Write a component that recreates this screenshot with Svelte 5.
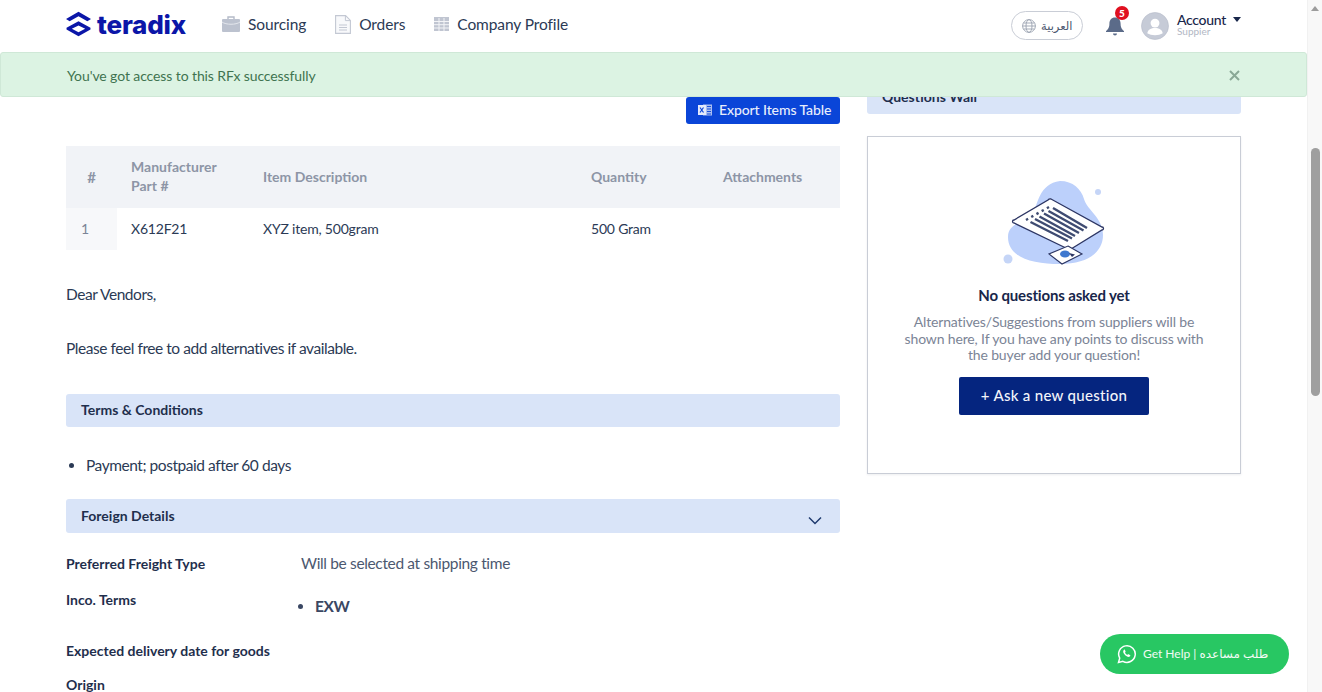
<script>
  const navItems = [
    { label: 'Sourcing', icon: 'case' },
    { label: 'Orders', icon: 'doc' },
    { label: 'Company Profile', icon: 'building' }
  ];

  const items = [
    { no: 1, part: 'X612F21', description: 'XYZ item, 500gram', quantity: '500 Gram' }
  ];

  let showAlert = true;
</script>

<div class="page">
  <div class="viewport">
    <header class="topbar">
      <a class="logo" href="#top">
        <svg width="25" height="26" viewBox="1 1 24 24.5">
          <path d="M13 1.5 25 8.5 21.5 10.6 13 5.7 4.5 10.6 1 8.5Z" fill="#0b16a8"/>
          <path d="M13 10.5 24.5 16.8V18.6L13 25 1.5 18.6V16.8ZM13 14.6 6.6 17.8 13 21.2 19.4 17.8Z" fill="#0b16a8"/>
        </svg>
        <span>teradix</span>
      </a>
      <nav>
        {#each navItems as item}
          <a class="nav-item" href="#top">
            {#if item.icon === 'case'}
              <svg width="18" height="16" viewBox="0 0 18 16">
                <path d="M6 3V1h6v2" fill="none" stroke="#b4bac8" stroke-width="1.4"/>
                <rect x="0" y="3" width="18" height="13" rx="1" fill="#bcc2cf"/>
                <path d="M0 6c4 3 14 3 18 0" fill="none" stroke="#e4e7ed" stroke-width="1"/>
              </svg>
            {:else if item.icon === 'doc'}
              <svg width="16" height="19" viewBox="0 0 16 19">
                <path d="M.6.6h10l4.8 4.8v13H.6Z" fill="#f8f9fb" stroke="#c3c8d3" stroke-width="1.1"/>
                <path d="M10.4.8v4.8h4.8" fill="none" stroke="#c3c8d3"/>
                <path d="M4 10h8M4 12.5h8M4 15h8" stroke="#c3c8d3"/>
              </svg>
            {:else}
              <svg width="15" height="14" viewBox="0 0 15 14">
                <rect width="15" height="14" fill="#c0c5d1"/>
                <path d="M0 4.500h15M0 7.700h15M0 11h15M5 1v13M10 1v13" stroke="#f3f4f7" stroke-width="1"/>
              </svg>
            {/if}
            <span>{item.label}</span>
          </a>
        {/each}
      </nav>
      <div class="top-right">
        <button class="lang">
          <svg width="14" height="14" viewBox="0 0 14 14" fill="none" stroke="#9aa1b0" stroke-width="0.9">
            <circle cx="7" cy="7" r="6.4"/>
            <ellipse cx="7" cy="7" rx="3" ry="6.4"/>
            <path d="M.6 7h12.800M1.500 4h11M1.500 10h11"/>
          </svg>
          <span>العربية</span>
        </button>
        <div class="bell">
          <svg width="20" height="20" viewBox="0 0 19 20">
            <path d="M9.500 1.500c3.600 0 5.600 2.700 5.600 6.200 0 4 1.400 5.500 3.400 7.300v.9H.5V15c2-1.800 3.400-3.300 3.400-7.300 0-3.500 2-6.200 5.600-6.200Z" fill="#5b6b89"/>
            <path d="M7.500 17.500h4c0 1.200-.9 2-2 2s-2-.8-2-2Z" fill="#5b6b89"/>
          </svg>
          <span class="badge">5</span>
        </div>
        <div class="account">
          <svg class="avatar" width="28" height="28" viewBox="0 0 29 29">
            <circle cx="14.500" cy="14.500" r="14" fill="#c6cbd7" stroke="#b4bac8" stroke-width="0.6"/>
            <circle cx="14.500" cy="11.500" r="4.600" fill="#fff"/>
            <path d="M6.500 22c.6-4 4-5.500 8-5.500s7.400 1.500 8 5.500c-2 1.300-5 2-8 2s-6-.7-8-2Z" fill="#fff"/>
          </svg>
          <div class="who">
            <div class="name">Account <i class="caret"></i></div>
            <div class="role">Suppier</div>
          </div>
        </div>
      </div>
    </header>

    {#if showAlert}
      <div class="alert">
        <span>You've got access to this RFx successfully</span>
        <button class="close" aria-label="Close" on:click={() => (showAlert = false)}>
          <svg width="11" height="11" viewBox="0 0 11 11" stroke="#8aa896" stroke-width="2">
            <path d="M1 1l9 9M10 1l-9 9"/>
          </svg>
        </button>
      </div>
    {/if}

    <main class="content">
      <section class="left">
        <div class="export-row">
          <button class="export">
            <svg width="14" height="14" viewBox="0 0 14 14">
              <rect x="5" y="1.500" width="9" height="11" fill="#a9bdf0"/>
              <path d="M9 3.500h4M9 6h4M9 8.500h4M9 11h4" stroke="#0a45d8" stroke-width="0.9"/>
              <rect x="0" y="2" width="8" height="10" fill="#e4eafb"/>
              <path d="M2 4.500l3.500 5M5.500 4.500l-3.500 5" stroke="#0a45d8" stroke-width="1.200"/>
            </svg>
            <span>Export Items Table</span>
          </button>
        </div>

        <table>
          <thead>
            <tr>
              <th class="c-no">#</th>
              <th class="c-part">Manufacturer<br />Part #</th>
              <th class="c-desc">Item Description</th>
              <th class="c-qty">Quantity</th>
              <th class="c-att">Attachments</th>
            </tr>
          </thead>
          <tbody>
            {#each items as row}
              <tr>
                <td class="no">{row.no}</td>
                <td>{row.part}</td>
                <td>{row.description}</td>
                <td>{row.quantity}</td>
                <td></td>
              </tr>
            {/each}
          </tbody>
        </table>

        <p class="note first">Dear Vendors,</p>
        <p class="note second">Please feel free to add alternatives if available.</p>

        <div class="bar terms">Terms &amp; Conditions</div>
        <ul class="terms-list">
          <li>Payment; postpaid after 60 days</li>
        </ul>

        <div class="bar foreign">
          <span>Foreign Details</span>
          <svg class="chev" width="14" height="9" viewBox="0 0 14 9" fill="none" stroke="#1f3a6e" stroke-width="1.500">
            <path d="M1 1.500l6 6 6-6"/>
          </svg>
        </div>

        <dl class="details">
          <div class="freight">
            <dt>Preferred Freight Type</dt>
            <dd class="plain">Will be selected at shipping time</dd>
          </div>
          <div class="inco">
            <dt>Inco. Terms</dt>
            <dd><ul><li>EXW</li></ul></dd>
          </div>
          <div class="delivery">
            <dt>Expected delivery date for goods</dt>
            <dd></dd>
          </div>
          <div class="origin">
            <dt>Origin</dt>
            <dd></dd>
          </div>
        </dl>
      </section>

      <aside class="right">
        <div class="bar wall">Questions Wall</div>
        <div class="wall-card">
          <svg class="art" width="104" height="88" viewBox="0 0 104 88">
            <path d="M57 1C70 1 78 9 81 19C84 30 100 38 100 55C100 72 85 84 57 84C30 84 5 78 5 57C5 43 22 42 30 33C35 24 36 4 57 1Z" fill="#bcd0fb"/>
            <circle cx="95" cy="12" r="3" fill="#c5d5f7"/>
            <circle cx="5" cy="79" r="4.500" fill="#c5d5f7"/>
            <path d="M45 20a3 3 0 0 1 3-1L99 47a1.500 1.500 0 0 1 0 3L68 69a3 3 0 0 1-3 0L11 43a1.500 1.500 0 0 1 0-3Z" fill="#fff" stroke="#2c3563" stroke-width="1.300"/>
            <g stroke="#3f4c72" stroke-width="2.400">
              <path d="M50 28 84 48M45.500 31 80.500 50.500M41 33.500 76 53M36.500 36.500 72 56M32 39 69 58.500M27.500 42 65 61"/>
            </g>
            <path d="M23 40 46 27" stroke="#3f4c72" stroke-width="2.400" stroke-dasharray="2.400 3.600"/>
            <path d="M65 66 79 74 59 84 46 74Z" fill="#fff" stroke="#2c3563" stroke-width="1.100"/>
            <ellipse cx="62" cy="74" rx="5" ry="3.500" fill="#3e78cf"/>
            <path d="M66 73l6 1.500-3 2.500Z" fill="#2c3563"/>
          </svg>
          <h3>No questions asked yet</h3>
          <p>Alternatives/Suggestions from suppliers will be shown here, If you have any points to discuss with the buyer add your question!</p>
          <button class="ask">+ Ask a new question</button>
        </div>
      </aside>
    </main>

    <button class="help">
      <svg width="20" height="20" viewBox="0 0 20 20" fill="none">
        <path d="M1.500 18.500l1.200-4.400a8.300 8.300 0 1 1 3.200 3.200Z" stroke="#fff" stroke-width="1.500"/>
        <path d="M7 5.800c-1.300 1-1.100 3 .8 5 2 2.100 4 2.700 5.200 1.500.5-.5.400-1-.1-1.300l-1.300-.7c-.4-.2-.7 0-1 .3l-.3.3c-.9-.3-1.900-1.300-2.300-2.300l.3-.3c.3-.3.400-.6.200-1l-.6-1.300c-.2-.5-.6-.6-.9-.2Z" fill="#fff"/>
      </svg>
      <span>Get Help | طلب مساعده</span>
    </button>
  </div>

  <div class="scrollbar">
    <i class="arrow"></i>
    <div class="thumb"></div>
  </div>
</div>

<style>
  :global(body) {
    margin: 0;
    overflow: hidden;
    background: #fff;
  }

  .page {
    display: flex;
    height: 692px;
    font-family: "Lato", "DejaVu Sans", sans-serif;
    color: #2b3a55;
    overflow: hidden;
  }

  .viewport {
    position: relative;
    flex: 1;
    min-width: 0;
    overflow: hidden;
  }

  .scrollbar {
    width: 15px;
    background: #f8f8f8;
    display: flex;
    flex-direction: column;
    align-items: center;
    border-left: 1px solid #f1f1f1;
    box-sizing: border-box;
  }

  .arrow {
    margin-top: 6px;
    border-left: 4.500px solid transparent;
    border-right: 4.500px solid transparent;
    border-bottom: 5px solid #9c9c9c;
  }

  .thumb {
    width: 9px;
    height: 248px;
    margin-top: 137px;
    background: #9f9f9f;
    border-radius: 5px;
  }

  .topbar {
    position: absolute;
    top: 0;
    left: 0;
    right: 0;
    height: 51px;
    z-index: 3;
    display: flex;
    align-items: center;
    padding: 0 66px;
    background: #fff;
    box-sizing: border-box;
  }

  .logo {
    display: flex;
    align-items: center;
    gap: 6px;
    margin-bottom: 3px;
    color: #0b16a8;
    font-family: "Inter", sans-serif;
    font-size: 26px;
    font-weight: 800;
    text-decoration: none;
    letter-spacing: -0.2px;
  }

  nav {
    display: flex;
    align-items: center;
    margin-left: 36px;
    margin-bottom: 3px;
    gap: 29px;
  }

  .nav-item {
    display: flex;
    align-items: center;
    gap: 8px;
    color: #2b3a55;
    font-size: 15.5px;
    letter-spacing: -0.1px;
    text-decoration: none;
  }

  .top-right {
    margin-left: auto;
    display: flex;
    align-items: center;
  }

  .lang {
    display: flex;
    align-items: center;
    gap: 5px;
    width: 72px;
    height: 29px;
    padding: 0 10px;
    border: 1px solid #c9cdd6;
    border-radius: 15px;
    background: #fff;
    color: #4c5870;
    font-family: "DejaVu Sans", sans-serif;
    font-size: 11.5px;
    box-sizing: border-box;
  }

  .lang svg {
    flex: none;
  }

  .bell {
    position: relative;
    display: flex;
    margin-left: 22px;
  }

  .badge {
    position: absolute;
    top: -10px;
    right: -4px;
    width: 14px;
    height: 14px;
    border-radius: 50%;
    background: #e01020;
    color: #fff;
    font-size: 10px;
    font-weight: 900;
    line-height: 14px;
    text-align: center;
  }

  .account {
    display: flex;
    align-items: center;
    gap: 8px;
    margin-left: 16px;
  }

  .avatar {
    display: block;
  }

  .who {
    padding-bottom: 2px;
  }

  .name {
    display: flex;
    align-items: center;
    gap: 7px;
    color: #18264a;
    font-size: 14px;
    font-weight: 500;
    letter-spacing: -0.3px;
    line-height: 13px;
  }

  .caret {
    border-left: 4px solid transparent;
    border-right: 4px solid transparent;
    border-top: 5px solid #18264a;
  }

  .role {
    color: #b2b7c4;
    font-size: 10px;
    line-height: 10px;
  }

  .alert {
    position: absolute;
    top: 52px;
    left: 0;
    right: 0;
    height: 45px;
    z-index: 2;
    display: flex;
    align-items: center;
    justify-content: space-between;
    padding: 2px 66px 0;
    background: #dcf3e3;
    border: 1px solid #cfe8d7;
    border-radius: 3px;
    box-sizing: border-box;
    color: #3f7350;
    font-size: 14px;
    letter-spacing: -0.1px;
  }

  .close {
    display: flex;
    padding: 0;
    border: 0;
    background: none;
  }

  .content {
    display: flex;
    gap: 27px;
    padding: 97px 66px 0;
  }

  .left {
    width: 774px;
    flex: none;
  }

  .right {
    width: 374px;
    flex: none;
    margin-top: -17px;
  }

  .export-row {
    display: flex;
    justify-content: flex-end;
  }

  .export {
    display: flex;
    align-items: center;
    gap: 7px;
    width: 154px;
    height: 27px;
    padding: 0 0 2px 12px;
    border: 0;
    border-radius: 3px;
    background: #0a45d8;
    color: #e8eefc;
    font-family: inherit;
    font-size: 14px;
    font-weight: 500;
    letter-spacing: -0.1px;
    white-space: nowrap;
  }

  table {
    width: 774px;
    margin-top: 22px;
    border-collapse: collapse;
    table-layout: fixed;
    font-size: 14px;
  }

  th {
    height: 62px;
    padding: 0 0 2px 14px;
    background: #f1f3f7;
    color: #8d95a6;
    font-weight: 700;
    line-height: 19px;
    text-align: left;
    box-sizing: border-box;
  }

  th.c-no {
    width: 51px;
    padding: 0;
    text-align: center;
    font-size: 15px;
  }

  .c-part { width: 132px; }
  .c-desc { width: 328px; }
  .c-qty { width: 132px; }

  td {
    height: 42px;
    padding: 0 0 2px 14px;
    color: #2b3a55;
    letter-spacing: -0.2px;
    box-sizing: border-box;
  }

  td.no {
    background: #f7f8fa;
    color: #7b8496;
    padding-left: 15px;
  }

  .note {
    margin: 0;
    font-size: 15.5px;
    letter-spacing: -0.45px;
    line-height: 20px;
  }

  .first { margin-top: 34px; }
  .second { margin-top: 34px; }

  .bar {
    display: flex;
    align-items: center;
    justify-content: space-between;
    padding: 0 15px 2px;
    background: #d9e4f8;
    border-radius: 3px;
    color: #1f2f4d;
    font-size: 14px;
    font-weight: 700;
    box-sizing: border-box;
  }

  .terms {
    height: 33px;
    margin-top: 36px;
  }

  .terms-list {
    margin: 28px 0 0;
    padding-left: 20px;
    font-size: 15.5px;
    letter-spacing: -0.45px;
    line-height: 20px;
  }

  .foreign {
    height: 34px;
    margin-top: 24px;
    padding-right: 18px;
  }

  .chev {
    margin-top: 11px;
  }

  .details {
    margin: 0;
    font-size: 14px;
  }

  .details > div {
    display: flex;
    margin: 0;
  }

  dt {
    width: 235px;
    flex: none;
    color: #1f2f4d;
    font-weight: 700;
    line-height: 18px;
  }

  dd {
    margin: 0;
    color: #4c5870;
    font-size: 15.5px;
    letter-spacing: -0.35px;
    line-height: 20px;
  }

  dd.plain {
    margin-top: -2px;
  }

  dd ul {
    margin: 5px 0 0;
    padding-left: 14px;
    color: #3a4763;
    font-weight: 700;
  }

  .freight { padding-top: 22px; }
  .inco { padding-top: 18px; }
  .delivery { padding-top: 26px; }
  .origin { padding-top: 16px; }

  .wall {
    height: 34px;
  }

  .wall-card {
    display: flex;
    flex-direction: column;
    align-items: center;
    height: 338px;
    margin-top: 22px;
    padding-top: 43px;
    border: 1px solid #c9cdd6;
    box-shadow: 0 1px 2px rgba(30, 40, 70, 0.08);
    box-sizing: border-box;
  }

  .art {
    display: block;
    margin-left: 2px;
  }

  h3 {
    margin: 17px 0 0;
    color: #18264a;
    font-size: 15px;
    font-weight: 700;
    letter-spacing: -0.15px;
    line-height: 20px;
  }

  .wall-card p {
    width: 310px;
    margin: 9px 0 0;
    color: #7b8496;
    font-size: 14px;
    letter-spacing: -0.15px;
    line-height: 16.500px;
    text-align: center;
  }

  .ask {
    width: 190px;
    height: 38px;
    margin-top: 13px;
    padding: 0 0 2px;
    border: 0;
    border-radius: 2px;
    background: #05257f;
    color: #f2f4fa;
    font-family: inherit;
    font-size: 15px;
    font-weight: 500;
    letter-spacing: 0.3px;
  }

  .help {
    position: absolute;
    right: 18px;
    bottom: 18px;
    z-index: 4;
    display: flex;
    align-items: center;
    gap: 6px;
    width: 189px;
    height: 40px;
    padding: 0 0 0 17px;
    border: 0;
    border-radius: 20px;
    background: #28c763;
    color: #f2fbf5;
    font-family: "Lato", "DejaVu Sans", sans-serif;
    font-size: 12px;
    white-space: nowrap;
    box-sizing: border-box;
  }

  .help span {
    margin-bottom: 2px;
  }
</style>
